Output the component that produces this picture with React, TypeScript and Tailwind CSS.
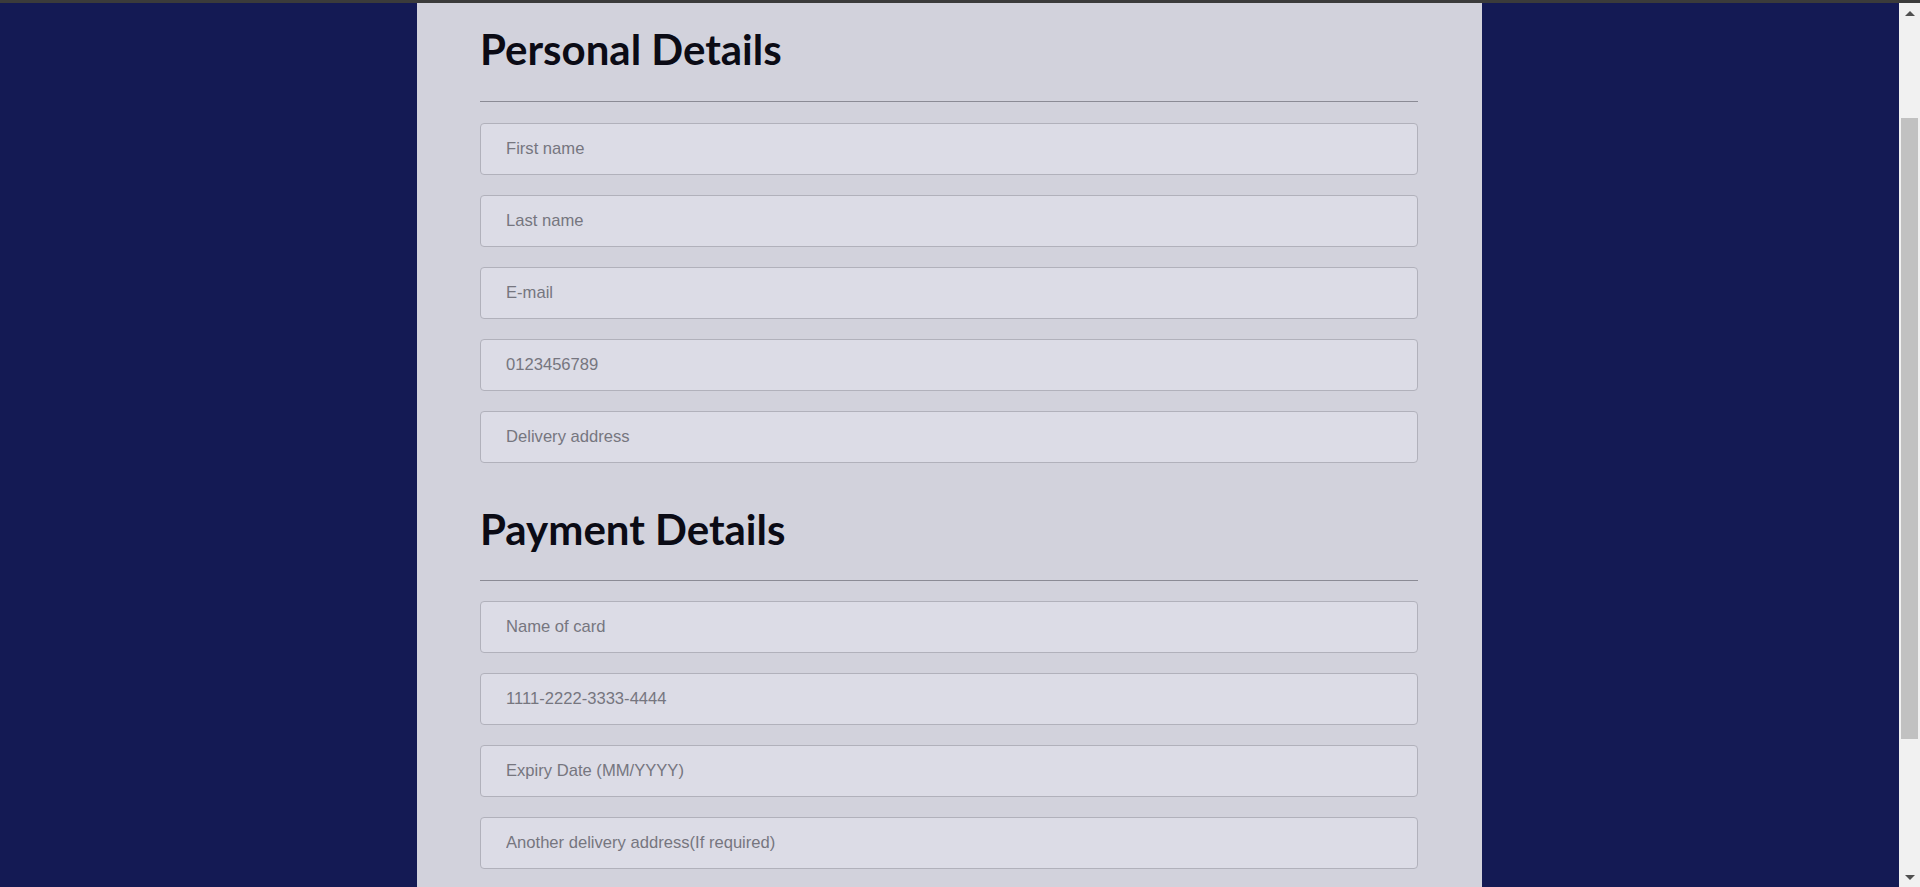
import React from 'react';

const personal = ['First name', 'Last name', 'E-mail', '0123456789', 'Delivery address'];
const payment = ['Name of card', '1111-2222-3333-4444', 'Expiry Date (MM/YYYY)', 'Another delivery address(If required)'];

function Field({ placeholder }: { placeholder: string }) {
  return (
    <input
      type="text"
      placeholder={placeholder}
      className="block w-full h-[52px] rounded-[4px] border border-[#b1b1bb] bg-[#dcdce6] px-[25px] text-[16.6px] text-[#333] placeholder:text-[#76767f] outline-none"
      style={{ fontFamily: '"Liberation Sans", Arial, sans-serif' }}
    />
  );
}

function Section({ title, fields, className, hrClass, listClass }: { title: string; fields: string[]; className: string; hrClass: string; listClass: string }) {
  return (
    <section className={className}>
      <h2 className="text-[42px] font-bold leading-none text-[#0b0b15]" style={{ fontFamily: 'Lato, sans-serif' }}>
        {title}
      </h2>
      <hr className={`${hrClass} border-0 border-t border-[#8b8b95]`} />
      <div className={`${listClass} flex flex-col gap-[20px]`}>
        {fields.map((f) => (
          <Field key={f} placeholder={f} />
        ))}
      </div>
    </section>
  );
}

export default function App() {
  return (
    <div className="h-[887px] overflow-hidden flex flex-col bg-[#141a54]">
      <div className="h-[3px] bg-[#3b3b3b] shrink-0" />
      <div className="flex flex-1 min-h-0">
        <main className="flex-1 flex justify-center overflow-hidden">
          <div className="w-[1065px] bg-[#d2d2dc] pl-[63px] pr-[64px] pt-[25px]">
            <Section title="Personal Details" fields={personal} className="" hrClass="mt-[31px]" listClass="mt-[21px]" />
            <Section title="Payment Details" fields={payment} className="mt-[45px]" hrClass="mt-[30px]" listClass="mt-[20px]" />
          </div>
        </main>
        <div className="w-[21px] shrink-0 bg-[#f1f1f1] flex flex-col items-center">
          <div className="h-[20px] flex items-center justify-center">
            <div className="w-0 h-0 border-l-[5px] border-r-[5px] border-b-[5px] border-l-transparent border-r-transparent border-b-[#505050]" />
          </div>
          <div className="mt-[95px] w-[17px] h-[621px] bg-[#c1c1c1]" />
          <div className="flex-1" />
          <div className="h-[20px] flex items-center justify-center">
            <div className="w-0 h-0 border-l-[5px] border-r-[5px] border-t-[5px] border-l-transparent border-r-transparent border-t-[#505050]" />
          </div>
        </div>
      </div>
    </div>
  );
}
